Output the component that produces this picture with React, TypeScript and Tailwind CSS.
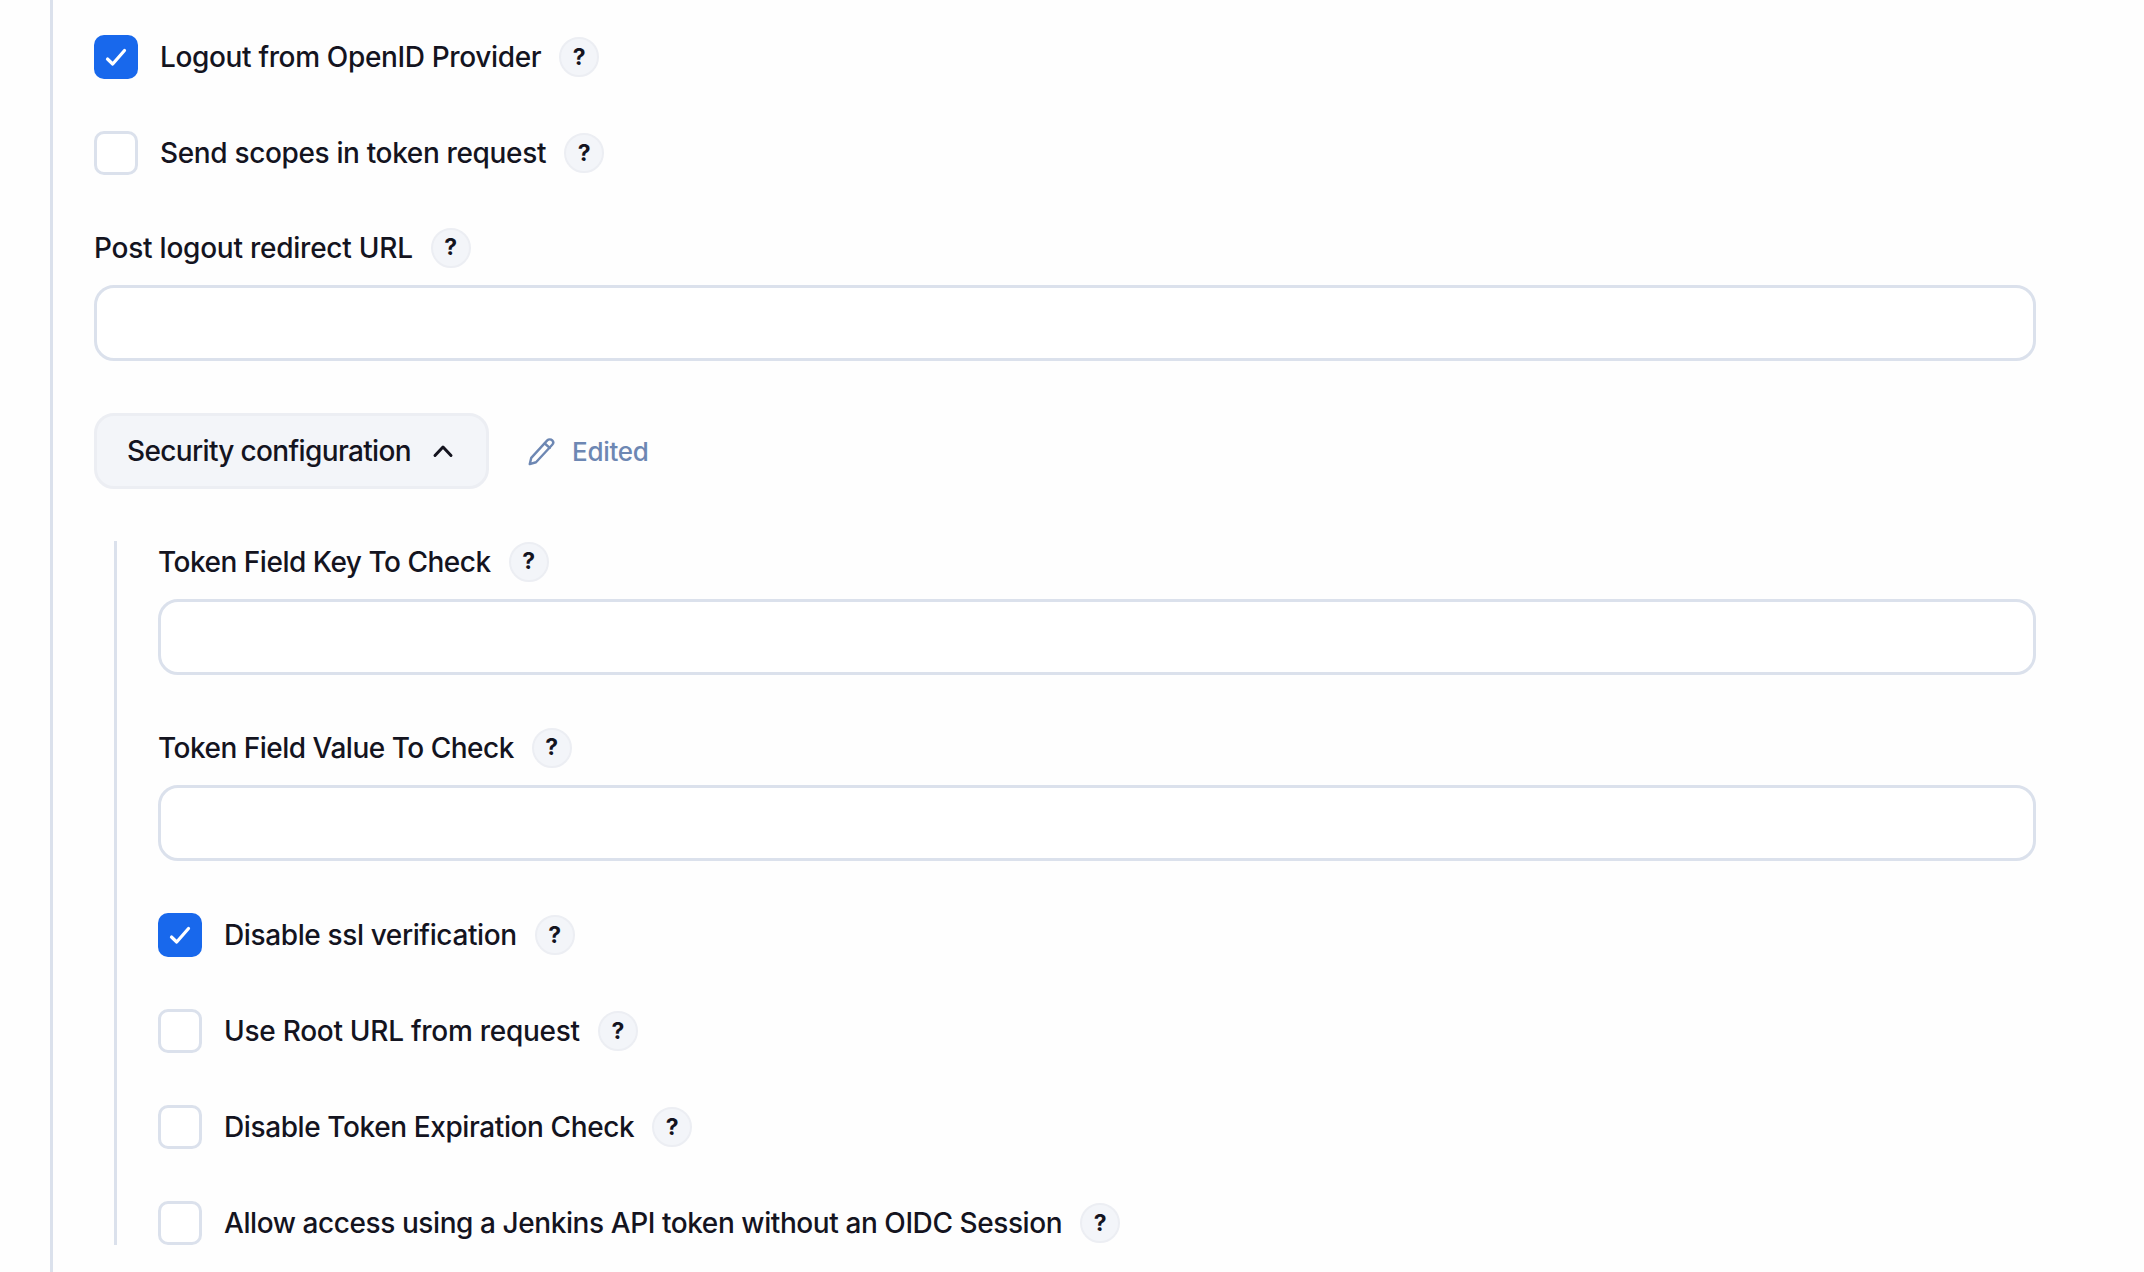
import React from "react";

const font = { fontFamily: "Inter, sans-serif" };

function Help() {
  return (
    <span className="ml-[18px] flex h-[40px] w-[40px] shrink-0 items-center justify-center rounded-full border-[2px] border-[#eceef3] bg-[#f3f5f9] text-[23px] font-bold text-[#14141f]">
      ?
    </span>
  );
}

function Check({ label, checked, track }: { label: string; checked?: boolean; track: string }) {
  return (
    <div className="flex h-[44px] items-center">
      {checked ? (
        <span className="h-[44px] w-[44px] shrink-0 rounded-[10px] bg-[#1868ec]">
          <svg width="44" height="44" viewBox="0 0 44 44" fill="none" stroke="#fff" strokeWidth="3.2" strokeLinecap="round" strokeLinejoin="round">
            <path d="M13.5 24 L18.7 29 L30.5 15.5" />
          </svg>
        </span>
      ) : (
        <span className="h-[44px] w-[44px] shrink-0 rounded-[10px] border-[3px] border-[#dbe1ec] bg-white" />
      )}
      <span className={`ml-[22px] text-[28px] font-[450] leading-[44px] ${track}`}>{label}</span>
      <Help />
    </div>
  );
}

function Field({ label, track }: { label: string; track: string }) {
  return (
    <div className="flex flex-col">
      <div className="flex h-[41px] items-center">
        <span className={`text-[28px] font-[450] leading-[40px] ${track}`}>{label}</span>
        <Help />
      </div>
      <div className="mt-[17px] h-[76px] rounded-[20px] border-[3px] border-[#dbe1ec] bg-white" />
    </div>
  );
}

export default function App() {
  return (
    <div className="h-[1272px] w-[2144px] overflow-hidden bg-[#fefefe] pl-[50px] text-[#14141f]" style={font}>
      <div className="flex h-full w-[1986px] flex-col gap-[52px] border-l-[3px] border-[#dbe1ec] pl-[41px] pt-[35px]">
        <Check label="Logout from OpenID Provider" checked track="tracking-[-0.35px]" />
        <Check label="Send scopes in token request" track="tracking-[-0.35px]" />
        <Field label="Post logout redirect URL" track="tracking-[-0.24px]" />
        <div className="flex h-[76px] items-center">
          <div className="flex h-[76px] w-[395px] items-center rounded-[20px] border-[3px] border-[#eceef3] bg-[#f3f5f9] pl-[30px]">
            <span className="text-[28px] font-[450] tracking-[-0.65px]">Security configuration</span>
            <svg className="ml-[20px]" width="24" height="24" viewBox="0 0 24 24" fill="none" stroke="#14141f" strokeWidth="3" strokeLinecap="round" strokeLinejoin="round">
              <path d="M4 16.5 L12 8 L20 16.5" />
            </svg>
          </div>
          <svg className="ml-[37px]" width="30" height="30" viewBox="0 0 24 24" fill="none" stroke="#6d87b3" strokeWidth="1.9" strokeLinecap="round" strokeLinejoin="round">
            <path d="M17 3.5 C18 2.5 20 2.5 21 3.5 C22 4.5 22 6 21 7 L8 21 L3 22.5 L4.2 17.5 Z" />
            <path d="M15 6 L19 9.5" />
          </svg>
          <span className="ml-[16px] text-[26px] font-[450] tracking-[-0.3px] text-[#6d87b3]">Edited</span>
        </div>
        <div className="ml-[20px] flex w-[1922px] flex-col gap-[52px] border-l-[3px] border-[#dbe1ec] pl-[41px]">
          <Field label="Token Field Key To Check" track="tracking-[-0.49px]" />
          <Field label="Token Field Value To Check" track="tracking-[-0.5px]" />
          <Check label="Disable ssl verification" checked track="tracking-[-0.38px]" />
          <Check label="Use Root URL from request" track="tracking-[-0.27px]" />
          <Check label="Disable Token Expiration Check" track="tracking-[-0.4px]" />
          <Check label="Allow access using a Jenkins API token without an OIDC Session" track="tracking-[-0.42px]" />
        </div>
      </div>
    </div>
  );
}
